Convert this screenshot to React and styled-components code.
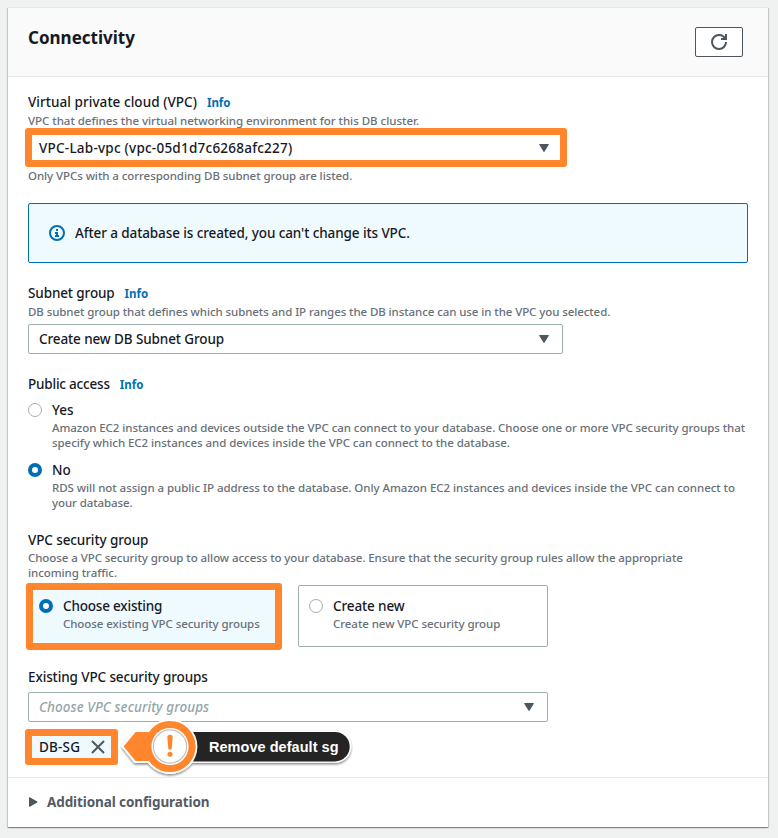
import React from 'react';
import styled, { createGlobalStyle, css } from 'styled-components';

const ORANGE = '#ff862c';
const BLUE = '#006fb4';
const SLATE = '#4d555f';
const OUTLINE = '#a0b0b1';

const GlobalStyle = createGlobalStyle`
  *, *::before, *::after { box-sizing: border-box; }
  body {
    margin: 0;
    background: #f0f2f2;
    color: #16191f;
    font-family: "Noto Sans", "Open Sans", sans-serif;
    font-size: 13.5px;
    font-weight: 500;
    overflow: hidden;
  }
`;

const Page = styled.main`
  height: 838px;
  padding: 7px 10px 0 8px;
`;

const Panel = styled.section`
  width: 760px;
  height: 820px;
  background: #fff;
  border-top: 1px solid #e6eaea;
  box-shadow: 0 1px 1px 0 rgba(0, 28, 36, 0.3), 1px 1px 1px 0 rgba(0, 28, 36, 0.15),
    -1px 1px 1px 0 rgba(0, 28, 36, 0.15);
`;

const PanelHeader = styled.header`
  display: flex;
  justify-content: space-between;
  height: 69px;
  padding: 19px 25px 0 20px;
  background: #fafafa;
  border-bottom: 1px solid #e6eaea;
`;

const Title = styled.h2`
  margin: 0;
  font-size: 17px;
  font-weight: 700;
  line-height: 22px;
`;

const IconButton = styled.button`
  display: flex;
  align-items: center;
  justify-content: center;
  width: 48px;
  height: 30px;
  padding: 0;
  color: ${SLATE};
  background: #fff;
  border: 1px solid ${SLATE};
  border-radius: 2px;
`;

const PanelBody = styled.div`
  height: 700px;
  padding: 14px 20px 0;
`;

const Field = styled.div`
  margin-top: ${(p) => p.$gap || 0}px;
`;

const LabelRow = styled.div`
  display: flex;
  align-items: center;
  gap: 10px;
  height: 22px;
  line-height: 22px;
  white-space: nowrap;
`;

const Label = styled.span`
  letter-spacing: ${(p) => p.$track || 0}px;
`;

const InfoLink = styled.a`
  padding-top: 1px;
  color: ${BLUE};
  font-size: 11.5px;
  font-weight: 700;
`;

const Hint = styled.div`
  height: 15px;
  color: #687078;
  font-size: 11.5px;
  font-weight: 500;
  line-height: 15px;
  letter-spacing: ${(p) => p.$track ?? -0.06}px;
  white-space: nowrap;
`;

const FieldNote = styled(Hint)`
  margin-top: 5px;
`;

const HintLines = styled.div`
  margin-top: -1px;
`;

const SelectBox = styled.div`
  position: relative;
  display: flex;
  align-items: center;
  justify-content: space-between;
  width: ${(p) => p.$width}px;
  height: 30px;
  margin-top: ${(p) => p.$gap ?? 5}px;
  padding: 0 13px 0 10px;
  background: #fff;
  border: 1px solid ${OUTLINE};
  border-radius: 2px;
  white-space: nowrap;
`;

const Placeholder = styled.span`
  color: #95a5a6;
  font-style: italic;
  letter-spacing: ${(p) => p.$track || 0}px;
`;

const Highlight = styled.div`
  position: absolute;
  inset: ${(p) => p.$inset};
  border: 7px solid ${ORANGE};
  border-radius: 3px;
  pointer-events: none;
`;

const Alert = styled.div`
  display: flex;
  align-items: center;
  gap: 10px;
  height: 60px;
  margin-top: 20px;
  padding-left: 20px;
  background: #effaff;
  border: 1px solid ${BLUE};
  border-radius: 2px;
`;

const RadioOption = styled.div`
  display: flex;
  gap: 10px;
  height: 52px;
  margin-top: ${(p) => p.$gap}px;
`;

const Radio = styled.span`
  flex: none;
  width: 14px;
  height: 14px;
  margin-top: 4px;
  background: #fff;
  border-radius: 50%;
  ${(p) =>
    p.$checked
      ? css`border: 4px solid ${BLUE};`
      : css`border: 1px solid ${OUTLINE};`}
`;

const Tiles = styled.div`
  display: flex;
  gap: 20px;
  margin-top: 5px;
`;

const Tile = styled.div`
  position: relative;
  display: flex;
  gap: 10px;
  width: 250px;
  height: 62px;
  padding: 9px 10px;
  background: ${(p) => (p.$selected ? '#effaff' : '#fff')};
  border: 1px solid ${(p) => (p.$selected ? BLUE : OUTLINE)};
  border-radius: 2px;
`;

const TokenRow = styled.div`
  display: flex;
  align-items: center;
  height: 30px;
  margin-top: 10px;
`;

const Token = styled.div`
  position: relative;
  display: flex;
  align-items: center;
  justify-content: space-between;
  width: 86px;
  height: 30px;
  padding: 0 8px 0 11px;
  background: #effaff;
`;

const Callout = styled.div`
  position: relative;
  width: 234px;
  height: 60px;
  margin-left: 5px;
  flex: none;
`;

const CalloutArt = styled.svg`
  position: absolute;
  inset: 0;
`;

const CalloutText = styled.span`
  position: absolute;
  left: 90px;
  top: 20px;
  color: #fff;
  font: 700 14.5px/20px "Liberation Sans", sans-serif;
  letter-spacing: ${(p) => p.$track || 0}px;
  white-space: nowrap;
`;

const Expander = styled.footer`
  display: flex;
  align-items: center;
  gap: 9px;
  height: 50px;
  padding: 0 0 2px 21px;
  color: #545b64;
  font-weight: 700;
  border-top: 1px solid #e6eaea;
`;

const RefreshIcon = () => (
  <svg width="16" height="16" viewBox="0 0 16 16" fill="none" stroke="currentColor" strokeWidth="2">
    <path d="M10 5h5V0" />
    <path d="M15 8a6.957 6.957 0 0 1-7 7 6.957 6.957 0 0 1-7-7 6.957 6.957 0 0 1 7-7 6.87 6.87 0 0 1 6.3 4" />
  </svg>
);

const CaretDown = () => (
  <svg width="10" height="8" viewBox="0 0 10 8">
    <path d="M0.6 0.5h8.8L5 7.6z" fill={SLATE} stroke={SLATE} strokeLinejoin="round" />
  </svg>
);

const CaretRight = () => (
  <svg width="9" height="10" viewBox="0 0 9 10">
    <path d="M0.5 0.6v8.8L8.2 5z" fill={SLATE} stroke={SLATE} strokeLinejoin="round" />
  </svg>
);

const InfoIcon = () => (
  <svg width="16" height="16" viewBox="0 0 16 16">
    <circle cx="8" cy="8" r="7" fill="none" stroke={BLUE} strokeWidth="2" />
    <path d="M7 4h2v2H7zM6 7h3v3h1v2H6v-2h1V9H6z" fill={BLUE} />
  </svg>
);

const CloseIcon = () => (
  <svg width="16" height="16" viewBox="0 0 16 16">
    <path d="M2 2l12 12M14 2L2 14" stroke={SLATE} strokeWidth="2" />
  </svg>
);

const SelectField = ({ width, gap, placeholder, track, highlight, children }) => (
  <SelectBox $width={width} $gap={gap}>
    {placeholder ? <Placeholder $track={track}>{children}</Placeholder> : <Label $track={track}>{children}</Label>}
    <CaretDown />
    {highlight && <Highlight $inset="-6px -5px -5px -4px" />}
  </SelectBox>
);

const Choice = ({ label, track, lines }) => (
  <div>
    <LabelRow><Label $track={track}>{label}</Label></LabelRow>
    <HintLines>
      {lines.map(([text, t]) => <Hint key={text} $track={t}>{text}</Hint>)}
    </HintLines>
  </div>
);

const RemoveCallout = () => (
  <Callout>
    <CalloutArt width="234" height="60" viewBox="0 0 234 60">
      <defs>
        <filter id="lift" x="-10%" y="-20%" width="120%" height="150%">
          <feDropShadow dx="0" dy="1.5" stdDeviation="1.1" floodColor="#000" floodOpacity="0.5" />
        </filter>
      </defs>
      <g filter="url(#lift)">
        <path d="M50 13.2H216a16 16 0 0 1 0 32.6H50z" fill="#fff" />
        <path d="M2.4 29.5L15.4 13h30v33h-30z" fill="#fff" />
        <circle cx="51" cy="29.5" r="27.4" fill="#fff" />
      </g>
      <path d="M50 15H216a14.7 14.7 0 0 1 0 29.4H50z" fill="#242424" />
      <circle cx="51" cy="29.5" r="27.4" fill="#fff" />
      <path d="M4.6 29.5L16.6 15h24v29h-24z" fill={ORANGE} />
      <circle cx="51" cy="29.5" r="25.6" fill={ORANGE} />
      <circle cx="51" cy="29.5" r="18.6" fill="#fff" />
      <circle cx="51" cy="29.5" r="16.6" fill="#fff" stroke="#c4c4c4" strokeWidth="1.2" />
      <path d="M48.3 20.4a2.7 2.7 0 0 1 5.4 0l-1.1 12.2h-3.2z" fill={ORANGE} />
      <circle cx="51" cy="37.2" r="2.5" fill={ORANGE} />
    </CalloutArt>
    <CalloutText $track={0.04}>Remove default sg</CalloutText>
  </Callout>
);

export default function App() {
  return (
    <Page>
      <GlobalStyle />
      <Panel>
        <PanelHeader>
          <Title>Connectivity</Title>
          <IconButton aria-label="Refresh"><RefreshIcon /></IconButton>
        </PanelHeader>
        <PanelBody>
          <Field>
            <LabelRow>
              <Label $track={0.05}>Virtual private cloud (VPC)</Label>
              <InfoLink>Info</InfoLink>
            </LabelRow>
            <Hint $track={-0.026}>VPC that defines the virtual networking environment for this DB cluster.</Hint>
            <SelectField width={535} track={0.24} highlight>VPC-Lab-vpc (vpc-05d1d7c6268afc227)</SelectField>
            <FieldNote $track={-0.07}>Only VPCs with a corresponding DB subnet group are listed.</FieldNote>
          </Field>

          <Alert>
            <InfoIcon />
            <Label $track={-0.1}>After a database is created, you can't change its VPC.</Label>
          </Alert>

          <Field $gap={19}>
            <LabelRow>
              <Label $track={-0.12}>Subnet group</Label>
              <InfoLink>Info</InfoLink>
            </LabelRow>
            <Hint $track={-0.086}>DB subnet group that defines which subnets and IP ranges the DB instance can use in the VPC you selected.</Hint>
            <SelectField width={535} track={-0.11}>Create new DB Subnet Group</SelectField>
          </Field>

          <Field $gap={19}>
            <LabelRow>
              <Label $track={-0.2}>Public access</Label>
              <InfoLink>Info</InfoLink>
            </LabelRow>
            <RadioOption $gap={4}>
              <Radio />
              <Choice
                label="Yes"
                lines={[
                  ['Amazon EC2 instances and devices outside the VPC can connect to your database. Choose one or more VPC security groups that', -0.067],
                  ['specify which EC2 instances and devices inside the VPC can connect to the database.', -0.05],
                ]}
              />
            </RadioOption>
            <RadioOption $gap={8}>
              <Radio $checked />
              <Choice
                label="No"
                lines={[
                  ['RDS will not assign a public IP address to the database. Only Amazon EC2 instances and devices inside the VPC can connect to', -0.045],
                  ['your database.', -0.09],
                ]}
              />
            </RadioOption>
          </Field>

          <Field $gap={18}>
            <LabelRow><Label $track={-0.1}>VPC security group</Label></LabelRow>
            <HintLines>
              <Hint $track={-0.07}>Choose a VPC security group to allow access to your database. Ensure that the security group rules allow the appropriate</Hint>
              <Hint>incoming traffic.</Hint>
            </HintLines>
            <Tiles>
              <Tile $selected>
                <Radio $checked />
                <Choice label="Choose existing" track={-0.19} lines={[['Choose existing VPC security groups', -0.08]]} />
                <Highlight $inset="-3px -5px -4px -3px" />
              </Tile>
              <Tile>
                <Radio />
                <Choice label="Create new" track={-0.12} lines={[['Create new VPC security group', -0.06]]} />
              </Tile>
            </Tiles>
          </Field>

          <Field $gap={19}>
            <LabelRow><Label $track={-0.11}>Existing VPC security groups</Label></LabelRow>
            <SelectField width={520} gap={4} track={0.07} placeholder>Choose VPC security groups</SelectField>
            <TokenRow>
              <Token>
                <Label $track={0.18}>DB-SG</Label>
                <CloseIcon />
                <Highlight $inset="-3px -4px -3px -3px" />
              </Token>
              <RemoveCallout />
            </TokenRow>
          </Field>
        </PanelBody>
        <Expander>
          <CaretRight />
          <Label $track={-0.1}>Additional configuration</Label>
        </Expander>
      </Panel>
    </Page>
  );
}
